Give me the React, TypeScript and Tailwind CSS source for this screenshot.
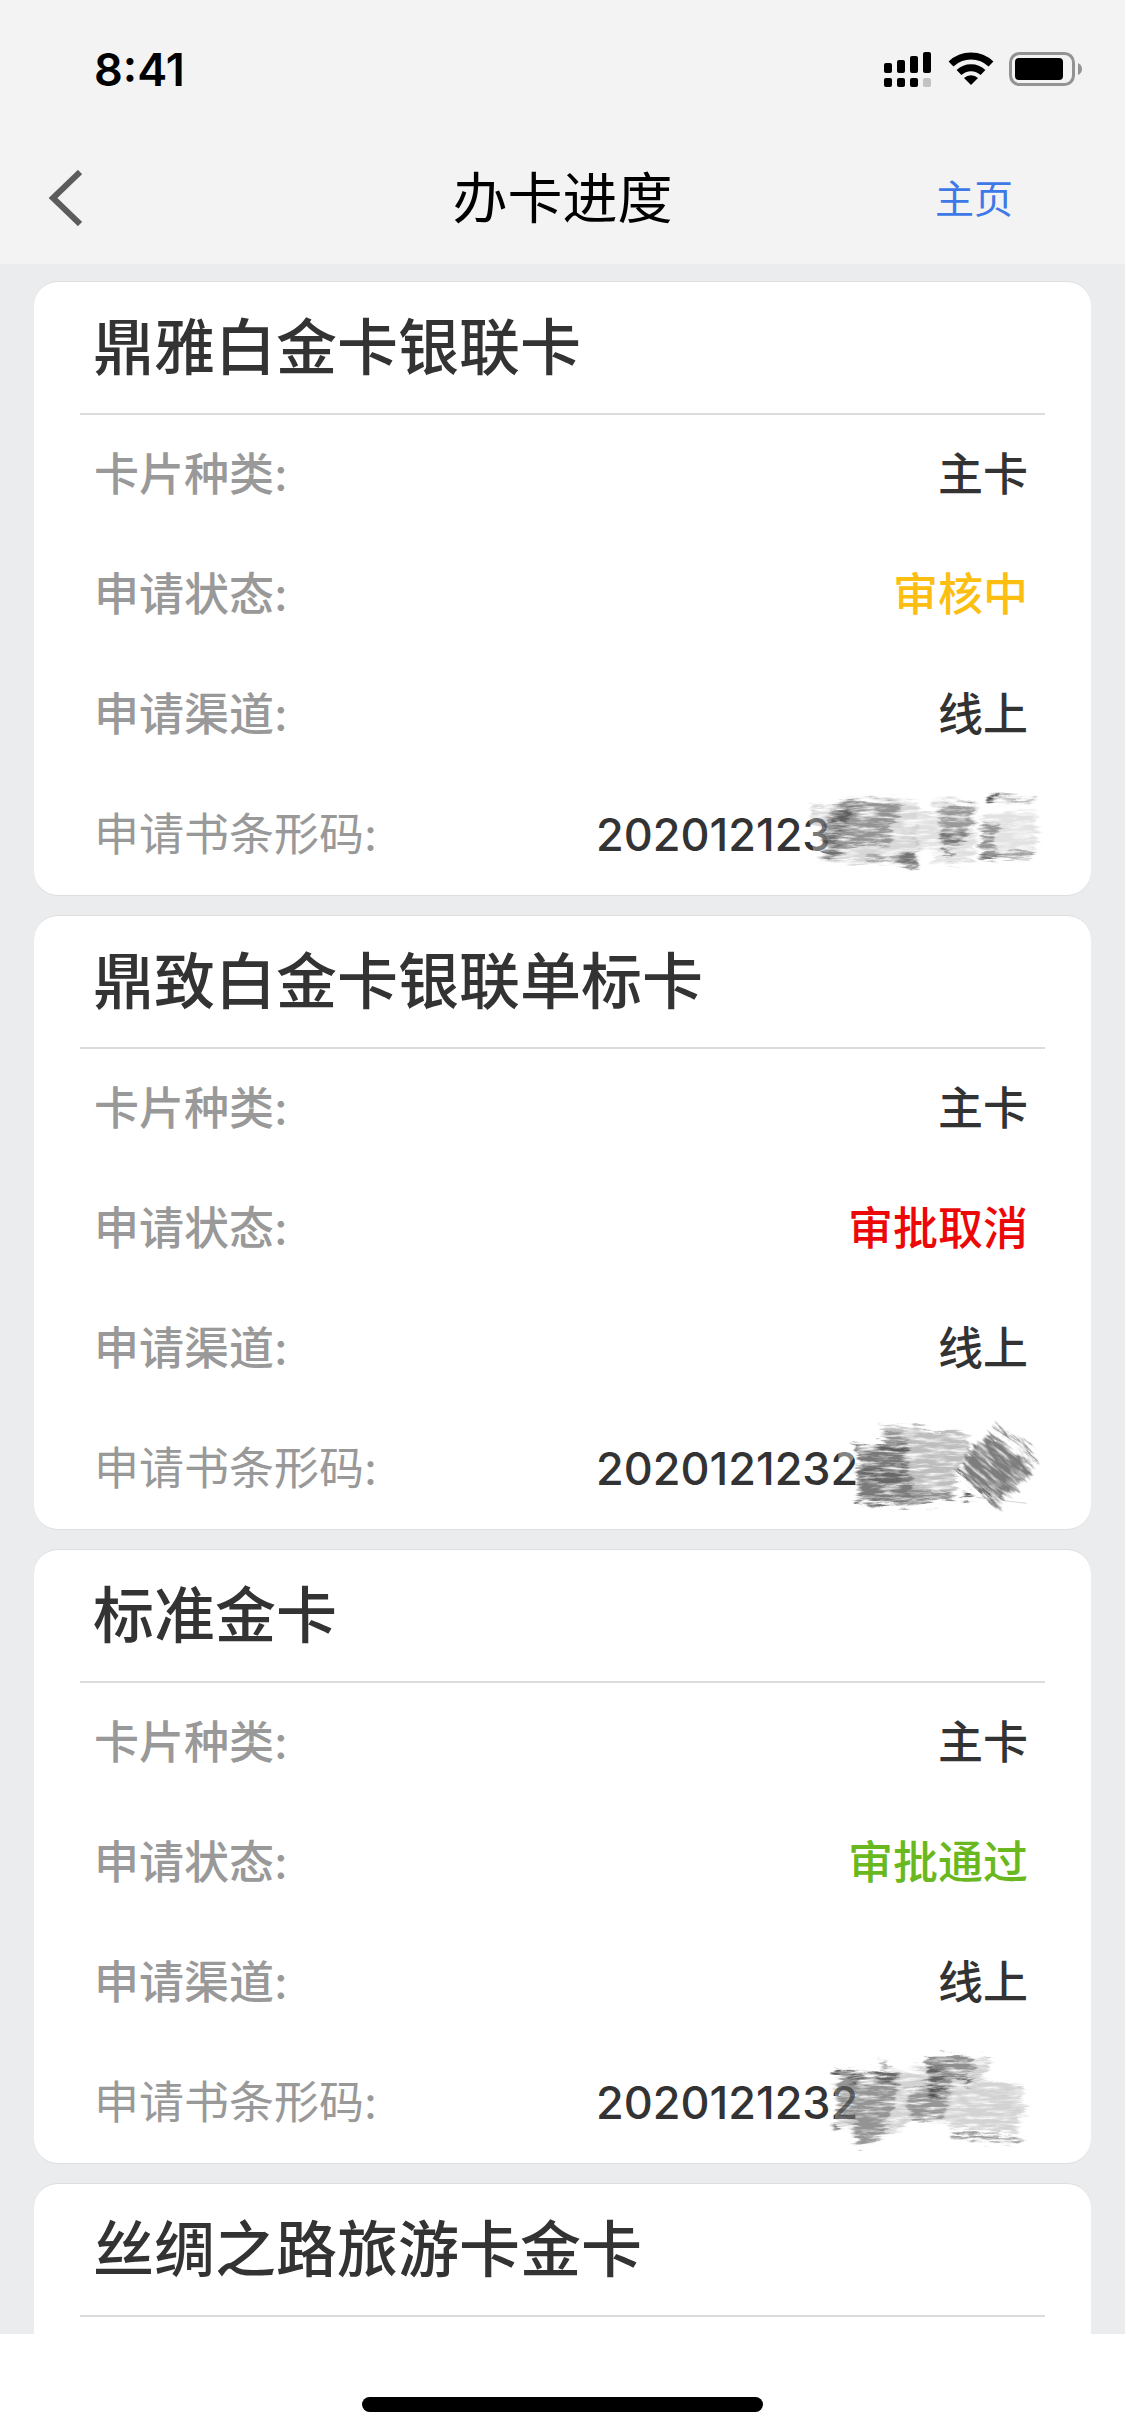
import { ReactNode } from 'react';

type Application = {
  name: string;
  kind?: string;
  status?: string;
  statusColor?: string;
  channel?: string;
  barcode?: string;
  mask?: ReactNode;
};

// Pencil texture shared by all the scribbles
function PencilFilter() {
  return (
    <svg className="absolute size-0" aria-hidden="true">
      <defs>
        <filter id="pencil" x="-5%" y="-10%" width="110%" height="120%">
          <feTurbulence type="fractalNoise" baseFrequency="0.015 0.09" numOctaves="4" seed="4" result="noise" />
          <feColorMatrix in="noise" type="matrix" values="0 0 0 0 0  0 0 0 0 0  0 0 0 0 0  2.4 0 0 0 -0.35" result="grain" />
          <feGaussianBlur in="SourceGraphic" stdDeviation="5 3" result="soft" />
          <feDisplacementMap in="soft" in2="noise" scale="50" xChannelSelector="G" yChannelSelector="A" result="rough" />
          <feComposite in="rough" in2="grain" operator="in" result="textured" />
          <feGaussianBlur in="textured" stdDeviation="2" />
        </filter>
      </defs>
    </svg>
  );
}

function Scribble({ children }: { children: ReactNode }) {
  return (
    <svg
      viewBox="0 0 780 300"
      className="absolute -right-[22px] top-1/2 h-[100px] w-[260px] -translate-y-1/2 overflow-visible"
      fill="#3a3a3a"
      aria-hidden="true"
    >
      {children}
    </svg>
  );
}

const maskOne = (
  <Scribble>
    <path d="M55 90 L130 85 L130 205 L70 200Z" fill="#fff" opacity=".35" />
    <g filter="url(#pencil)">
      <path d="M60 55 L120 75 L160 40 L380 45 L385 210 L340 235 L90 230 L110 150 L65 110Z" opacity=".2" />
      <path d="M120 75 L180 45 L335 60 L320 105 L295 125 L300 175 L180 185 L110 225 L95 150Z" opacity=".42" />
      <path d="M120 95 L185 65 L165 130 L130 130Z" opacity=".6" />
      <path d="M100 150 L150 140 L140 220 L105 225Z" opacity=".4" />
      <path d="M235 210 L380 205 L380 248 L325 240 L320 228 L240 225Z" opacity=".35" />
      <path d="M330 215 L382 215 L380 246 L330 240Z" opacity=".5" />
      <path d="M430 40 L560 60 L555 230 L425 238 L440 190 L375 190 L380 80 L440 85Z" opacity=".16" />
      <path d="M445 60 L550 60 L545 110 L520 180 L455 185Z" opacity=".42" />
      <path d="M455 150 L520 145 L510 185 L460 185Z" opacity=".4" />
      <path d="M460 195 L485 200 L480 214 L462 208Z" opacity=".8" />
      <path d="M590 36 L735 36 L730 52 L595 52Z" opacity=".35" />
      <path d="M588 34 L620 34 L614 54 L590 54Z" opacity=".9" />
      <path d="M580 85 L735 75 L740 185 L725 215 L580 225 L570 160Z" opacity=".14" />
      <path d="M585 110 L625 120 L610 175 L625 220 L580 225 L570 165Z" opacity=".45" />
      <path d="M580 206 L725 201 L720 216 L585 226Z" opacity=".4" />
    </g>
  </Scribble>
);

const maskTwo = (
  <Scribble>
    <path d="M145 95 L205 95 L160 165 L145 160Z" fill="#fff" opacity=".4" />
    <g filter="url(#pencil)">
      <path d="M270 12 L530 48 L540 100 L500 150 L490 240 L330 262 L230 258 L200 215 L205 95 L190 75 L290 75Z" opacity=".34" />
      <path d="M190 72 L355 75 L350 95 L195 95Z" opacity=".6" />
      <path d="M205 95 L355 85 L365 240 L330 262 L240 255 L205 205Z" opacity=".5" />
      <path d="M275 40 L350 45 L355 70 L290 68Z" opacity=".35" />
      <path d="M215 145 L350 140 L330 195 L220 190Z" opacity=".3" />
      <path d="M365 220 L485 215 L480 245 L365 252Z" opacity=".35" />
      <path d="M195 238 L218 241 L208 258 L195 254Z" opacity=".7" />
      <path d="M518 218 L547 223 L540 242 L518 237Z" opacity=".8" />
    </g>
    <g transform="rotate(40 620 150)">
      <g filter="url(#pencil)">
        <path d="M540 80 L690 70 L710 90 L705 170 L690 215 L560 225 L530 200 L520 160 L530 120Z" opacity=".66" />
        <path d="M530 42 L700 44 L700 56 L535 56Z" opacity=".65" />
        <path d="M520 222 L705 224 L708 238 L525 234Z" opacity=".75" />
      </g>
    </g>
    <path d="M560 235 L710 253" stroke="#777" strokeWidth="3" opacity=".3" />
  </Scribble>
);

const maskThree = (
  <Scribble>
    <path d="M135 95 L205 95 L205 205 L135 205Z" fill="#fff" opacity=".3" />
    <g filter="url(#pencil)">
      <path d="M135 52 L405 58 L350 35 L410 40 L405 5 L595 12 L600 50 L560 75 L700 100 L705 190 L680 215 L690 240 L490 225 L460 205 L365 205 L320 235 L230 275 L205 278 L180 225 L130 225 L145 170 L130 105 L150 90Z" opacity=".22" />
      <path d="M140 55 L330 65 L325 90 L300 180 L300 235 L225 270 L205 275 L190 220 L150 180Z" opacity=".42" />
      <path d="M175 60 L325 66 L320 88 L180 90Z" opacity=".55" />
      <path d="M133 48 L154 50 L150 66 L133 64Z" opacity=".8" />
      <path d="M350 110 L410 90 L480 110 L465 185 L430 205 L360 205Z" opacity=".4" />
      <path d="M405 8 L560 14 L540 60 L490 80 L440 145 L415 140 L420 90Z" opacity=".45" />
      <path d="M415 40 L455 40 L465 90 L445 140 L418 140Z" opacity=".5" />
      <path d="M505 73 L547 76 L537 94 L510 92Z" opacity=".8" />
      <path d="M485 240 L685 253 L690 272 L640 268 L490 258Z" opacity=".5" />
      <path d="M123 213 L147 216 L144 234 L126 232Z" opacity=".6" />
      <path d="M268 15 L280 22 L290 52 L278 52Z" opacity=".5" />
    </g>
  </Scribble>
);

const applications: Application[] = [
  {
    name: '鼎雅白金卡银联卡',
    kind: '主卡',
    status: '审核中',
    statusColor: 'text-[#fbbe11]',
    channel: '线上',
    barcode: '202012123',
    mask: maskOne,
  },
  {
    name: '鼎致白金卡银联单标卡',
    kind: '主卡',
    status: '审批取消',
    statusColor: 'text-[#ec0808]',
    channel: '线上',
    barcode: '2020121232',
    mask: maskTwo,
  },
  {
    name: '标准金卡',
    kind: '主卡',
    status: '审批通过',
    statusColor: 'text-[#6ab820]',
    channel: '线上',
    barcode: '2020121232',
    mask: maskThree,
  },
  { name: '丝绸之路旅游卡金卡' },
];

function StatusBar() {
  return (
    <div className="flex h-[132px] items-center justify-between pt-[6px] pr-[43px] pl-[94px]">
      <span className="text-[45px] leading-none font-semibold text-black">8:41</span>
      <div className="flex items-center pt-[2px]">
        <svg viewBox="0 0 48 36" className="mr-4 h-9 w-12">
          <rect x="0" y="11" width="8" height="10" rx="2" />
          <rect x="13" y="8" width="8" height="13" rx="2" />
          <rect x="26" y="4" width="8" height="17" rx="2" />
          <rect x="39" y="0" width="8" height="21" rx="2" />
          <rect x="0" y="26" width="8" height="9" rx="2" />
          <rect x="13" y="26" width="8" height="9" rx="2" />
          <rect x="26" y="26" width="8" height="9" rx="2" />
          <rect x="39" y="26" width="8" height="9" rx="2" fill="#c2c2c2" />
        </svg>
        <svg viewBox="0 0 46 36" className="mr-[15px] h-9 w-[46px]">
          <g fill="none" stroke="#000" strokeWidth="7">
            <path d="M3 12 A29 29 0 0 1 43 12" />
            <path d="M11 20.5 A17.5 17.5 0 0 1 35 20.5" />
          </g>
          <path d="M16 26 A10.5 10.5 0 0 1 30 26 L23 33Z" />
        </svg>
        <svg viewBox="0 0 73 36" className="h-9 w-[73px]">
          <rect x="1.5" y="1.5" width="63" height="31" rx="9" fill="none" stroke="#939393" strokeWidth="3" />
          <rect x="6" y="6" width="48" height="22" rx="4" />
          <path d="M69 11 Q73 13 73 17 Q73 21 69 23Z" fill="#939393" />
        </svg>
      </div>
    </div>
  );
}

function ApplicationCard({ item }: { item: Application }) {
  return (
    <section className="rounded-3xl border-t border-[#dedede] bg-white px-[46px] shadow-[0_1px_0_#dedede]">
      <h2 className="flex h-[133px] items-center border-b-2 border-[#dcdcdc] px-[13px] pt-[2px] text-[61px] leading-none font-medium">
        {item.name}
      </h2>
      {item.kind ? (
        <dl className="pr-[2px] pl-[14px] text-[45px] font-medium [&>div]:flex [&>div]:h-[120px] [&>div]:items-center [&>div]:justify-between [&>div]:pr-[15px] [&_dt]:text-[#999]">
          <div>
            <dt>卡片种类:</dt>
            <dd>{item.kind}</dd>
          </div>
          <div>
            <dt>申请状态:</dt>
            <dd className={item.statusColor}>{item.status}</dd>
          </div>
          <div>
            <dt>申请渠道:</dt>
            <dd>{item.channel}</dd>
          </div>
          <div>
            <dt className="font-normal">申请书条形码:</dt>
            <dd className="relative w-[432px]">
              {item.barcode}
              {item.mask}
            </dd>
          </div>
        </dl>
      ) : (
        <div className="h-[120px]" />
      )}
    </section>
  );
}

export default function App() {
  return (
    <div className="flex h-screen flex-col overflow-hidden bg-white font-[Inter,'Noto_Sans_CJK_SC',sans-serif] text-[#333]">
      <PencilFilter />
      <header className="shrink-0 bg-[#f3f3f3]">
        <StatusBar />
        <nav className="grid h-[132px] grid-cols-3 items-center px-[48px]">
          <button type="button" aria-label="返回">
            <svg viewBox="0 0 34 56" className="h-14 w-[34px]" fill="none" stroke="#5c5c5c" strokeWidth="6">
              <path d="M32 2 L5 28 L32 54" />
            </svg>
          </button>
          <h1 className="text-center text-[55px] leading-none whitespace-nowrap text-black">办卡进度</h1>
          <a href="#home" className="pr-16 text-right text-[39px] leading-none text-[#3f79e8]">
            主页
          </a>
        </nav>
      </header>

      <main className="flex min-h-0 flex-1 flex-col gap-5 overflow-hidden bg-[#ebecee] px-[34px] pt-[17px]">
        {applications.map((item) => (
          <ApplicationCard key={item.name} item={item} />
        ))}
      </main>

      <footer className="flex h-[102px] shrink-0 items-end justify-center pb-6">
        <div className="h-[15px] w-[401px] rounded-full bg-black" />
      </footer>
    </div>
  );
}
